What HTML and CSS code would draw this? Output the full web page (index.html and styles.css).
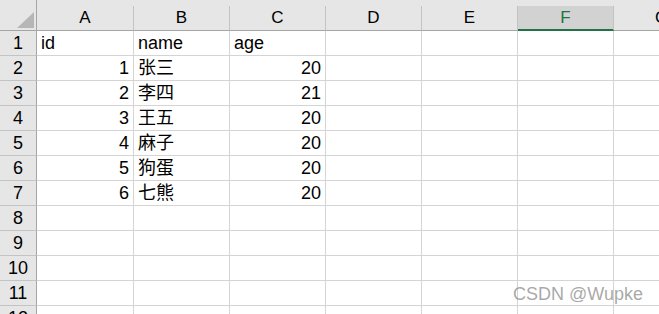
FILE: index.html
```html
<!DOCTYPE html>
<html>
<head>
<meta charset="utf-8">
<link rel="stylesheet" href="styles.css">
</head>
<body>
<div class="sheet">
  <div class="corner"><span class="tri"></span></div>
  <div class="ch"><span>A</span></div>
  <div class="ch"><span>B</span></div>
  <div class="ch"><span>C</span></div>
  <div class="ch"><span>D</span></div>
  <div class="ch"><span>E</span></div>
  <div class="ch sel"><span>F</span></div>
  <div class="ch"><span>G</span></div>

  <div class="rh">1</div><div class="c">id</div><div class="c">name</div><div class="c">age</div><div class="c"></div><div class="c"></div><div class="c"></div><div class="c"></div>
  <div class="rh">2</div><div class="c n">1</div><div class="c">张三</div><div class="c n">20</div><div class="c"></div><div class="c"></div><div class="c"></div><div class="c"></div>
  <div class="rh">3</div><div class="c n">2</div><div class="c">李四</div><div class="c n">21</div><div class="c"></div><div class="c"></div><div class="c"></div><div class="c"></div>
  <div class="rh">4</div><div class="c n">3</div><div class="c">王五</div><div class="c n">20</div><div class="c"></div><div class="c"></div><div class="c"></div><div class="c"></div>
  <div class="rh">5</div><div class="c n">4</div><div class="c">麻子</div><div class="c n">20</div><div class="c"></div><div class="c"></div><div class="c"></div><div class="c"></div>
  <div class="rh">6</div><div class="c n">5</div><div class="c">狗蛋</div><div class="c n">20</div><div class="c"></div><div class="c"></div><div class="c"></div><div class="c"></div>
  <div class="rh">7</div><div class="c n">6</div><div class="c">七熊</div><div class="c n">20</div><div class="c"></div><div class="c"></div><div class="c"></div><div class="c"></div>
  <div class="rh">8</div><div class="c"></div><div class="c"></div><div class="c"></div><div class="c"></div><div class="c"></div><div class="c"></div><div class="c"></div>
  <div class="rh">9</div><div class="c"></div><div class="c"></div><div class="c"></div><div class="c"></div><div class="c"></div><div class="c"></div><div class="c"></div>
  <div class="rh">10</div><div class="c"></div><div class="c"></div><div class="c"></div><div class="c"></div><div class="c"></div><div class="c"></div><div class="c"></div>
  <div class="rh">11</div><div class="c"></div><div class="c"></div><div class="c"></div><div class="c"></div><div class="c"></div><div class="c"></div><div class="c"></div>
  <div class="rh">12</div><div class="c"></div><div class="c"></div><div class="c"></div><div class="c"></div><div class="c"></div><div class="c"></div><div class="c"></div>
</div>
<div class="watermark">CSDN @Wupke</div>
</body>
</html>
```
FILE: styles.css
```css
html, body {
  margin: 0;
  padding: 0;
  width: 659px;
  height: 314px;
  overflow: hidden;
  background: #ffffff;
}

body {
  position: relative;
  font-family: "Liberation Sans", Arial, "Noto Sans CJK SC", sans-serif;
  color: #000000;
}

.sheet {
  display: grid;
  width: 710px;
  grid-template-columns: 37px 97px repeat(6, 96px);
  grid-template-rows: 31px repeat(12, 25px);
}

.sheet > div {
  box-sizing: border-box;
}

.corner {
  background: #e6e6e6;
  border-right: 1px solid #a6a6a6;
  border-bottom: 1px solid #a6a6a6;
  position: relative;
}

.tri {
  position: absolute;
  right: 2px;
  bottom: 2px;
  width: 0;
  height: 0;
  border-left: 17px solid transparent;
  border-bottom: 16px solid #b6b6b6;
}

.ch {
  background: #e6e6e6;
  display: flex;
  align-items: flex-end;
}

.ch span {
  box-sizing: border-box;
  display: block;
  width: 100%;
  height: 25px;
  border-right: 1px solid #c3c3c3;
  border-bottom: 1px solid #a6a6a6;
  text-align: center;
  font-size: 17px;
  line-height: 24px;
}

.ch.sel span {
  background: #d2d2d2;
  color: #217346;
  border-bottom: 2px solid #217346;
  line-height: 23px;
}

.rh {
  background: #e6e6e6;
  border-right: 1px solid #a6a6a6;
  border-bottom: 1px solid #c3c3c3;
  text-align: center;
  font-size: 18px;
  line-height: 24px;
}

.c {
  border-right: 1px solid #d4d4d4;
  border-bottom: 1px solid #d4d4d4;
  padding: 0 4px;
  font-size: 18px;
  line-height: 24px;
  white-space: nowrap;
  overflow: hidden;
}

.c.n {
  text-align: right;
}

.watermark {
  position: absolute;
  left: 513px;
  top: 284px;
  font-size: 18px;
  line-height: 20px;
  color: rgba(140, 140, 140, 0.75);
  white-space: nowrap;
}
```
